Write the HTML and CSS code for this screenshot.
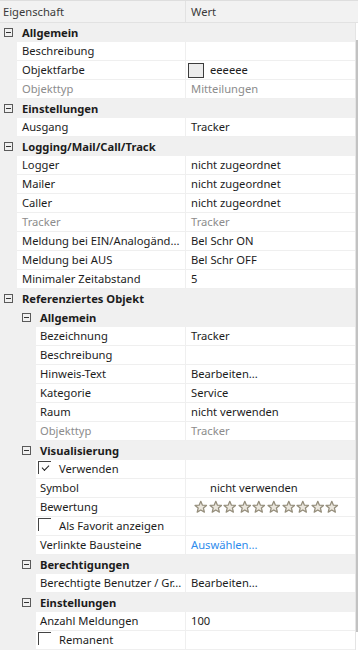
FILE: index.html
```html
<!DOCTYPE html>
<html lang="de">

<head>
    <meta charset="UTF-8" />
    <meta name="viewport" content="width=device-width, initial-scale=1" />
    <title>Eigenschaften</title>
    <link rel="stylesheet" href="styles.css">
</head>

<body>
    <svg width="0" height="0" class="defs">
        <symbol id="star" viewBox="0 0 14 14">
            <path d="M7 1.2 L8.7 5.1 L12.9 5.4 L9.7 8.1 L10.7 12.3 L7 10.1 L3.3 12.3 L4.3 8.1 L1.1 5.4 L5.3 5.1 Z"
                fill="#ebe7de" stroke="#958e7c" stroke-width="1.3" stroke-linejoin="round" />
        </symbol>
    </svg>

    <div class="grid">
        <div class="head">
            <div class="hname">Eigenschaft</div>
            <div class="hval">Wert</div>
        </div>

        <div class="body">
            <div class="rows">
                <div class="row cat"><span class="tog"></span><span class="cname">Allgemein</span></div>
                <div class="row l1"><div class="name">Beschreibung</div><div class="val"></div></div>
                <div class="row l1"><div class="name">Objektfarbe</div><div class="val color"><span class="swatch"></span>eeeeee</div></div>
                <div class="row l1 off"><div class="name">Objekttyp</div><div class="val">Mitteilungen</div></div>

                <div class="row cat"><span class="tog"></span><span class="cname">Einstellungen</span></div>
                <div class="row l1"><div class="name">Ausgang</div><div class="val">Tracker</div></div>

                <div class="row cat"><span class="tog"></span><span class="cname">Logging/Mail/Call/Track</span></div>
                <div class="row l1"><div class="name">Logger</div><div class="val">nicht zugeordnet</div></div>
                <div class="row l1"><div class="name">Mailer</div><div class="val">nicht zugeordnet</div></div>
                <div class="row l1"><div class="name">Caller</div><div class="val">nicht zugeordnet</div></div>
                <div class="row l1 off"><div class="name">Tracker</div><div class="val">Tracker</div></div>
                <div class="row l1"><div class="name">Meldung bei EIN/Analogänd...</div><div class="val">Bel Schr ON</div></div>
                <div class="row l1"><div class="name">Meldung bei AUS</div><div class="val">Bel Schr OFF</div></div>
                <div class="row l1"><div class="name">Minimaler Zeitabstand</div><div class="val">5</div></div>

                <div class="row cat"><span class="tog"></span><span class="cname">Referenziertes Objekt</span></div>
                <div class="row cat sub"><span class="tog"></span><span class="cname">Allgemein</span></div>
                <div class="row l2"><div class="name">Bezeichnung</div><div class="val">Tracker</div></div>
                <div class="row l2"><div class="name">Beschreibung</div><div class="val"></div></div>
                <div class="row l2"><div class="name">Hinweis-Text</div><div class="val">Bearbeiten...</div></div>
                <div class="row l2"><div class="name">Kategorie</div><div class="val">Service</div></div>
                <div class="row l2"><div class="name">Raum</div><div class="val">nicht verwenden</div></div>
                <div class="row l2 off"><div class="name">Objekttyp</div><div class="val">Tracker</div></div>

                <div class="row cat sub"><span class="tog"></span><span class="cname">Visualisierung</span></div>
                <div class="row l2"><div class="name check"><span class="box on"></span>Verwenden</div><div class="val"></div></div>
                <div class="row l2"><div class="name">Symbol</div><div class="val symbol">nicht verwenden</div></div>
                <div class="row l2">
                    <div class="name">Bewertung</div>
                    <div class="val stars">
                        <svg><use href="#star" /></svg><svg><use href="#star" /></svg><svg><use href="#star" /></svg><svg><use href="#star" /></svg><svg><use href="#star" /></svg><svg><use href="#star" /></svg><svg><use href="#star" /></svg><svg><use href="#star" /></svg><svg><use href="#star" /></svg><svg><use href="#star" /></svg>
                    </div>
                </div>
                <div class="row l2"><div class="name check"><span class="box"></span>Als Favorit anzeigen</div><div class="val"></div></div>
                <div class="row l2"><div class="name">Verlinkte Bausteine</div><div class="val link">Auswählen...</div></div>

                <div class="row cat sub"><span class="tog"></span><span class="cname">Berechtigungen</span></div>
                <div class="row l2"><div class="name">Berechtigte Benutzer / Gr...</div><div class="val">Bearbeiten...</div></div>

                <div class="row cat sub"><span class="tog"></span><span class="cname">Einstellungen</span></div>
                <div class="row l2"><div class="name">Anzahl Meldungen</div><div class="val">100</div></div>
                <div class="row l2"><div class="name check"><span class="box"></span>Remanent</div><div class="val"></div></div>
            </div>

            <div class="scroll">
                <div class="thumb"></div>
            </div>
        </div>
    </div>
</body>

</html>
```

FILE: styles.css
```css
body {
    margin: 0;
    background: #fff;
    font-family: "Noto Sans", "Open Sans", sans-serif;
    font-size: 11.2px;
    color: #1c1c1c;
}

.defs {
    position: absolute;
}

.grid {
    width: 358px;
}

.head {
    display: flex;
    height: 21px;
    line-height: 21px;
    background: #f2f2f2;
    border-top: 1px solid #dedede;
    border-bottom: 1px solid #e2e2e2;
    color: #3a3a3a;
}

.hname {
    width: 186px;
    box-sizing: border-box;
    padding-left: 3px;
    border-right: 1px solid #e2e2e2;
}

.hval {
    flex: 1;
    padding-left: 5px;
}

.body {
    display: flex;
}

.rows {
    flex: 1;
}

.scroll {
    width: 2px;
    border-left: 1px solid #e4e4e4;
}

.thumb {
    margin-top: 17px;
    height: 592px;
    background: #c2c2c2;
}

.row {
    display: flex;
    height: 19px;
    line-height: 18px;
    background: #f0f0f0;
}

.row.l1 {
    padding-left: 17px;
}

.row.l2 {
    padding-left: 36px;
}

.name,
.val {
    background: #fff;
    border-bottom: 1px solid #efefef;
    white-space: nowrap;
    overflow: hidden;
}

.name {
    box-sizing: border-box;
    border-right: 1px solid #efefef;
    padding-left: 5px;
}

.l1 .name {
    width: 169px;
}

.l2 .name {
    width: 150px;
    padding-left: 4px;
}

.val {
    flex: 1;
    padding-left: 5px;
}

.off .name,
.off .val {
    color: #8c8c8c;
}

.cat {
    align-items: center;
    font-weight: bold;
}

.tog {
    position: relative;
    width: 7px;
    height: 7px;
    margin-left: 4px;
    margin-right: 9px;
    border: 1px solid #5a5a5a;
}

.tog::after {
    content: "";
    position: absolute;
    left: 1px;
    right: 1px;
    top: 3px;
    height: 1px;
    background: #333;
}

.cat.sub .tog {
    margin-left: 22px;
}

.color {
    display: flex;
    align-items: center;
    padding-left: 2px;
}

.swatch {
    width: 14px;
    height: 13px;
    margin-right: 6px;
    background: #ececec;
    border: 1px solid #3c3c3c;
}

.symbol {
    padding-left: 24px;
}

.stars {
    display: flex;
    align-items: center;
    gap: 1px;
    padding-left: 8px;
}

.stars svg {
    width: 13.6px;
    height: 14px;
}

.link {
    color: #2e8cec;
}

.check {
    display: flex;
    padding-left: 2px !important;
}

.box {
    position: relative;
    width: 12px;
    height: 12px;
    margin-top: 1px;
    margin-right: 8px;
    border-left: 1px solid #444;
    border-top: 1px solid #444;
}

.box.on::after {
    content: "";
    position: absolute;
    left: 3px;
    top: 3px;
    width: 6px;
    height: 3px;
    border-left: 1px solid #222;
    border-bottom: 1px solid #222;
    transform: rotate(-45deg);
}
```
